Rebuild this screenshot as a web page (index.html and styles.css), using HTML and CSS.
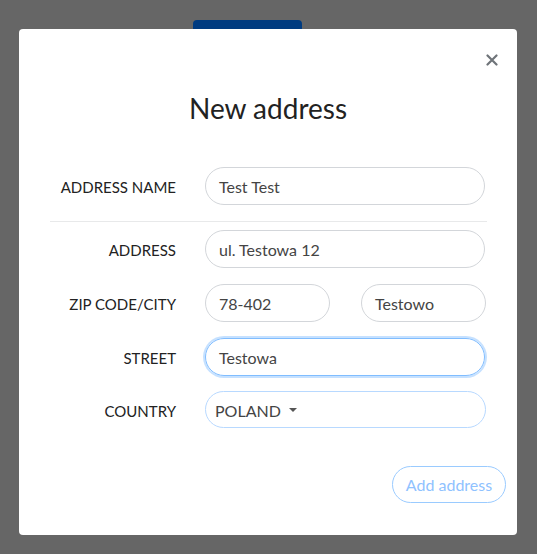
FILE: index.html
```html
<!DOCTYPE html>
<html>
<head>
<meta charset="utf-8">
<link rel="stylesheet" href="styles.css">
</head>
<body>
<div class="page">
  <div class="bg-btn"></div>
  <div class="backdrop">
    <div class="modal">
      <button class="close" aria-label="Close">
        <svg width="12" height="12" viewBox="0 0 12 12"><path d="M1.5 1.5 L10.5 10.5 M10.5 1.5 L1.5 10.5" stroke="#6f7479" stroke-width="2.2" stroke-linecap="round"/></svg>
      </button>
      <h1 class="title">New address</h1>
      <form class="form">
        <div class="row r-name">
          <label class="label">ADDRESS NAME</label>
          <div class="field"><div class="input">Test Test</div></div>
        </div>
        <hr class="sep">
        <div class="row">
          <label class="label">ADDRESS</label>
          <div class="field"><div class="input">ul. Testowa 12</div></div>
        </div>
        <div class="row">
          <label class="label">ZIP CODE/CITY</label>
          <div class="field split">
            <div class="input zip">78-402</div>
            <div class="input city">Testowo</div>
          </div>
        </div>
        <div class="row r-street">
          <label class="label">STREET</label>
          <div class="field"><div class="input focus">Testowa</div></div>
        </div>
        <div class="row r-country">
          <label class="label">COUNTRY</label>
          <div class="field"><div class="input select"><span class="sel-text">POLAND</span><span class="caret"></span></div></div>
        </div>
      </form>
      <div class="footer">
        <button class="add">Add address</button>
      </div>
    </div>
  </div>
</div>
</body>
</html>
```
FILE: styles.css
```css
* { box-sizing: border-box; }
html, body { margin: 0; padding: 0; }
body {
  width: 537px;
  height: 554px;
  background: #666666;
  font-family: "Lato", "Open Sans", sans-serif;
  color: #333;
  overflow: hidden;
}
.page { position: relative; width: 537px; height: 554px; }
.bg-btn {
  position: absolute;
  left: 193px;
  top: 20px;
  width: 109px;
  height: 20px;
  background: #003b80;
  border-radius: 4px;
}
.backdrop {
  position: relative;
  padding: 29px 20px 0 19px;
}
.modal {
  position: relative;
  width: 498px;
  height: 506px;
  background: #fff;
  border-radius: 4px;
}
.close {
  position: absolute;
  right: 19px;
  top: 25px;
  border: 0;
  background: none;
  padding: 0;
  width: 12px;
  height: 12px;
  display: block;
}
.close svg { display: block; }
.title {
  margin: 0;
  padding-top: 62px;
  height: 138px;
  text-align: center;
  font-weight: 400;
  font-size: 28px;
  line-height: 34px;
  color: #222;
}
.form {
  padding: 0 31px;
  display: flex;
  flex-direction: column;
}
.row {
  display: grid;
  grid-template-columns: 155px 1fr;
  align-items: center;
  margin-bottom: 16px;
}
.row.r-name { margin-bottom: 16px; }
.row.r-street { margin-bottom: 15px; }
.row.r-country { margin-bottom: 0; }
.label {
  text-align: right;
  padding-right: 29px;
  padding-top: 2px;
  font-size: 15px;
  color: #222;
}
.field { display: flex; }
.field.split { justify-content: space-between; }
.input {
  height: 38px;
  width: 280px;
  border: 1px solid #d3d6da;
  border-radius: 19px;
  padding: 1px 13px 0;
  display: flex;
  align-items: center;
  font-size: 16px;
  color: #444;
}
.input.zip { width: 125px; }
.input.city { width: 125px; }
.input.focus {
  border-color: #80bdff;
  box-shadow: 0 0 0 2px rgba(128, 189, 255, 0.45);
}
.input.select {
  width: 281px;
  border-color: #b8d9ff;
  padding-left: 9px;
  height: 37px;
}
.caret {
  display: inline-block;
  margin-left: 8px;
  width: 0;
  height: 0;
  border-left: 4px solid transparent;
  border-right: 4px solid transparent;
  border-top: 4px solid #555;
}
.sep {
  margin: 0 -1px 8px 0;
  border: 0;
  border-top: 1px solid #e8e9ea;
  height: 0;
}
.footer {
  display: flex;
  justify-content: flex-end;
  padding: 38px 11px 0 0;
}
.add {
  height: 37px;
  width: 114px;
  border: 1px solid #9acbff;
  border-radius: 19px;
  background: #fff;
  color: #8fc2ff;
  font-family: "Lato", "Open Sans", sans-serif;
  font-size: 16px;
  padding: 0;
}
```
